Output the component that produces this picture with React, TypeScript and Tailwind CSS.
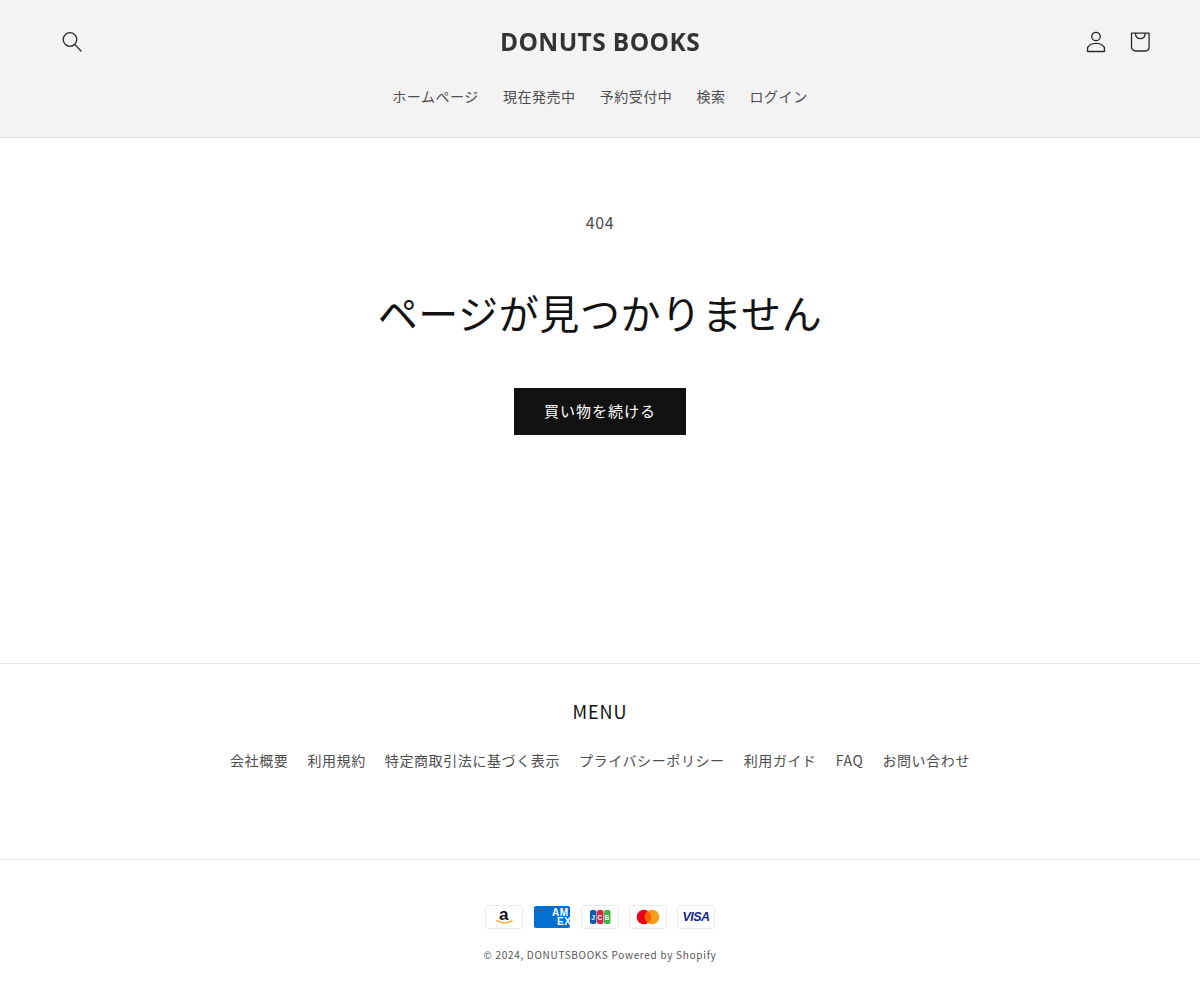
const font = '"Noto Sans CJK JP", "Noto Sans", sans-serif';

const nav = ["ホームページ", "現在発売中", "予約受付中", "検索", "ログイン"];
const links = ["会社概要", "利用規約", "特定商取引法に基づく表示", "プライバシーポリシー", "利用ガイド", "FAQ", "お問い合わせ"];

function Card({ children, border = true }: { children: React.ReactNode; border?: boolean }) {
  return (
    <div className={`w-[38px] h-[24px] rounded-[3px] overflow-hidden bg-white ${border ? "border border-[#ececec]" : ""}`}>
      <svg viewBox={border ? "1 1 36 22" : "0 0 38 24"} width={border ? 36 : 38} height={border ? 22 : 24} className="block">{children}</svg>
    </div>
  );
}

export default function App() {
  return (
    <div className="min-h-[1000px] bg-white flex flex-col tracking-[0.6px]" style={{ fontFamily: font }}>
      <header className="h-[138px] bg-[#f3f3f3] border-b border-[#dedede] flex flex-col">
        <div className="grid grid-cols-[1fr_auto_1fr] items-center px-[50px] pt-[20px] h-[64px]">
          <svg width="44" height="44" viewBox="0 0 44 44" fill="none" stroke="#2a2a2a" strokeWidth="1.3">
            <circle cx="20" cy="19.500" r="6.800" />
            <path d="M24.800 24.400L31 31" strokeLinecap="round" />
          </svg>
          <div className="text-[24.5px] leading-none font-bold text-[#333] tracking-[0.4px] blur-[0.5px]" style={{ fontFamily: '"Open Sans", sans-serif' }}>
            DONUTS BOOKS
          </div>
          <div className="flex justify-end mr-[-12px]">
            <svg width="44" height="44" viewBox="0 0 44 44" fill="none" stroke="#2a2a2a" strokeWidth="1.3">
              <circle cx="22" cy="16.500" r="4.200" />
              <path d="M13.500 31.500v-2.500c0-3.200 3.500-5.600 8.500-5.600s8.500 2.400 8.500 5.600v2.500z" strokeLinejoin="round" />
            </svg>
            <svg width="44" height="44" viewBox="0 0 44 44" fill="none" stroke="#2a2a2a" strokeWidth="1.3">
              <path d="M13.500 13.200h17.600v13.500c0 2.500-1.800 4.300-4.300 4.300h-9c-2.500 0-4.300-1.800-4.300-4.300z" strokeLinejoin="round" />
              <path d="M17.500 13.200c0 3.400 2 5.500 4.800 5.500s4.800-2.100 4.800-5.500" />
            </svg>
          </div>
        </div>
        <nav className="flex justify-center gap-[24px] mt-[20px] text-[14px] leading-[24px] text-[#4d4d4d] tracking-[0.55px]">
          {nav.map((n) => (
            <a key={n}>{n}</a>
          ))}
        </nav>
      </header>

      <main className="h-[525px] flex flex-col items-center">
        <div className="mt-[70px] text-[16px] leading-[28px] text-[#4d4d4d] tracking-[0.6px]">404</div>
        <h1 className="mt-[50px] text-[40px] leading-[52px] text-[#121212] font-normal tracking-[0.6px]">ページが見つかりません</h1>
        <a className="mt-[50px] w-[172px] h-[47px] bg-[#121212] text-white text-[15px] tracking-[1px] flex items-center justify-center">
          買い物を続ける
        </a>
      </main>

      <footer className="border-t border-[#e6e6e6] flex flex-col items-center">
        <div className="h-[195px] w-full flex flex-col items-center">
          <div className="mt-[34px] text-[18px] leading-[27px] text-[#121212] tracking-[0.9px]">MENU</div>
          <div className="mt-[23px] flex gap-[19px] text-[14px] leading-[24px] text-[#4d4d4d] tracking-[0.6px]">
            {links.map((l) => (
              <a key={l}>{l}</a>
            ))}
          </div>
        </div>
        <div className="w-full border-t border-[#e6e6e6] flex flex-col items-center">
          <div className="mt-[45px] flex gap-[10px]">
            <Card>
              <text x="19" y="15" textAnchor="middle" fontSize="17" fontWeight="700" fill="#111" fontFamily="Liberation Sans, sans-serif">a</text>
              <path d="M12 15.500c4 3 10 3.200 15 .2" fill="none" stroke="#f59e0b" strokeWidth="1.300" strokeLinecap="round" />
            </Card>
            <Card border={false}>
              <rect x="1" y="1" width="36" height="22" rx="2" fill="#016fd0" />
              <text x="19" y="11" fontSize="10" fontWeight="700" fill="#fff" fontFamily="Liberation Sans, sans-serif">AM</text>
              <text x="24" y="20" fontSize="10" fontWeight="700" fill="#fff" fontFamily="Liberation Sans, sans-serif">EX</text>
            </Card>
            <Card>
              <rect x="9" y="5" width="6.500" height="14" rx="2" fill="#0b5cab" />
              <rect x="16" y="5" width="6.500" height="14" rx="2" fill="#d9263f" />
              <rect x="23" y="5" width="6.500" height="14" rx="2" fill="#3db54a" />
              <text x="12.250" y="14.500" textAnchor="middle" fontSize="6.500" fontWeight="700" fill="#fff" fontFamily="Liberation Sans, sans-serif">J</text>
              <text x="19.250" y="14.500" textAnchor="middle" fontSize="6.500" fontWeight="700" fill="#fff" fontFamily="Liberation Sans, sans-serif">C</text>
              <text x="26.250" y="14.500" textAnchor="middle" fontSize="6.500" fontWeight="700" fill="#fff" fontFamily="Liberation Sans, sans-serif">B</text>
            </Card>
            <Card>
              <circle cx="15" cy="12" r="7.300" fill="#eb001b" />
              <circle cx="23" cy="12" r="7.300" fill="#f79e1b" />
              <path d="M19 5.900a7.300 7.300 0 0 1 0 12.200a7.300 7.300 0 0 1 0-12.200z" fill="#ff5f00" />
            </Card>
            <Card>
              <text x="19" y="16.300" textAnchor="middle" fontSize="12.500" fontWeight="700" fontStyle="italic" letterSpacing="-0.5" fill="#142688" fontFamily="Liberation Sans, sans-serif">VISA</text>
            </Card>
          </div>
          <div className="mt-[16px] text-[10px] leading-[20px] text-[#555] tracking-[0.7px]">© 2024, DONUTSBOOKS Powered by Shopify</div>
        </div>
      </footer>
    </div>
  );
}
